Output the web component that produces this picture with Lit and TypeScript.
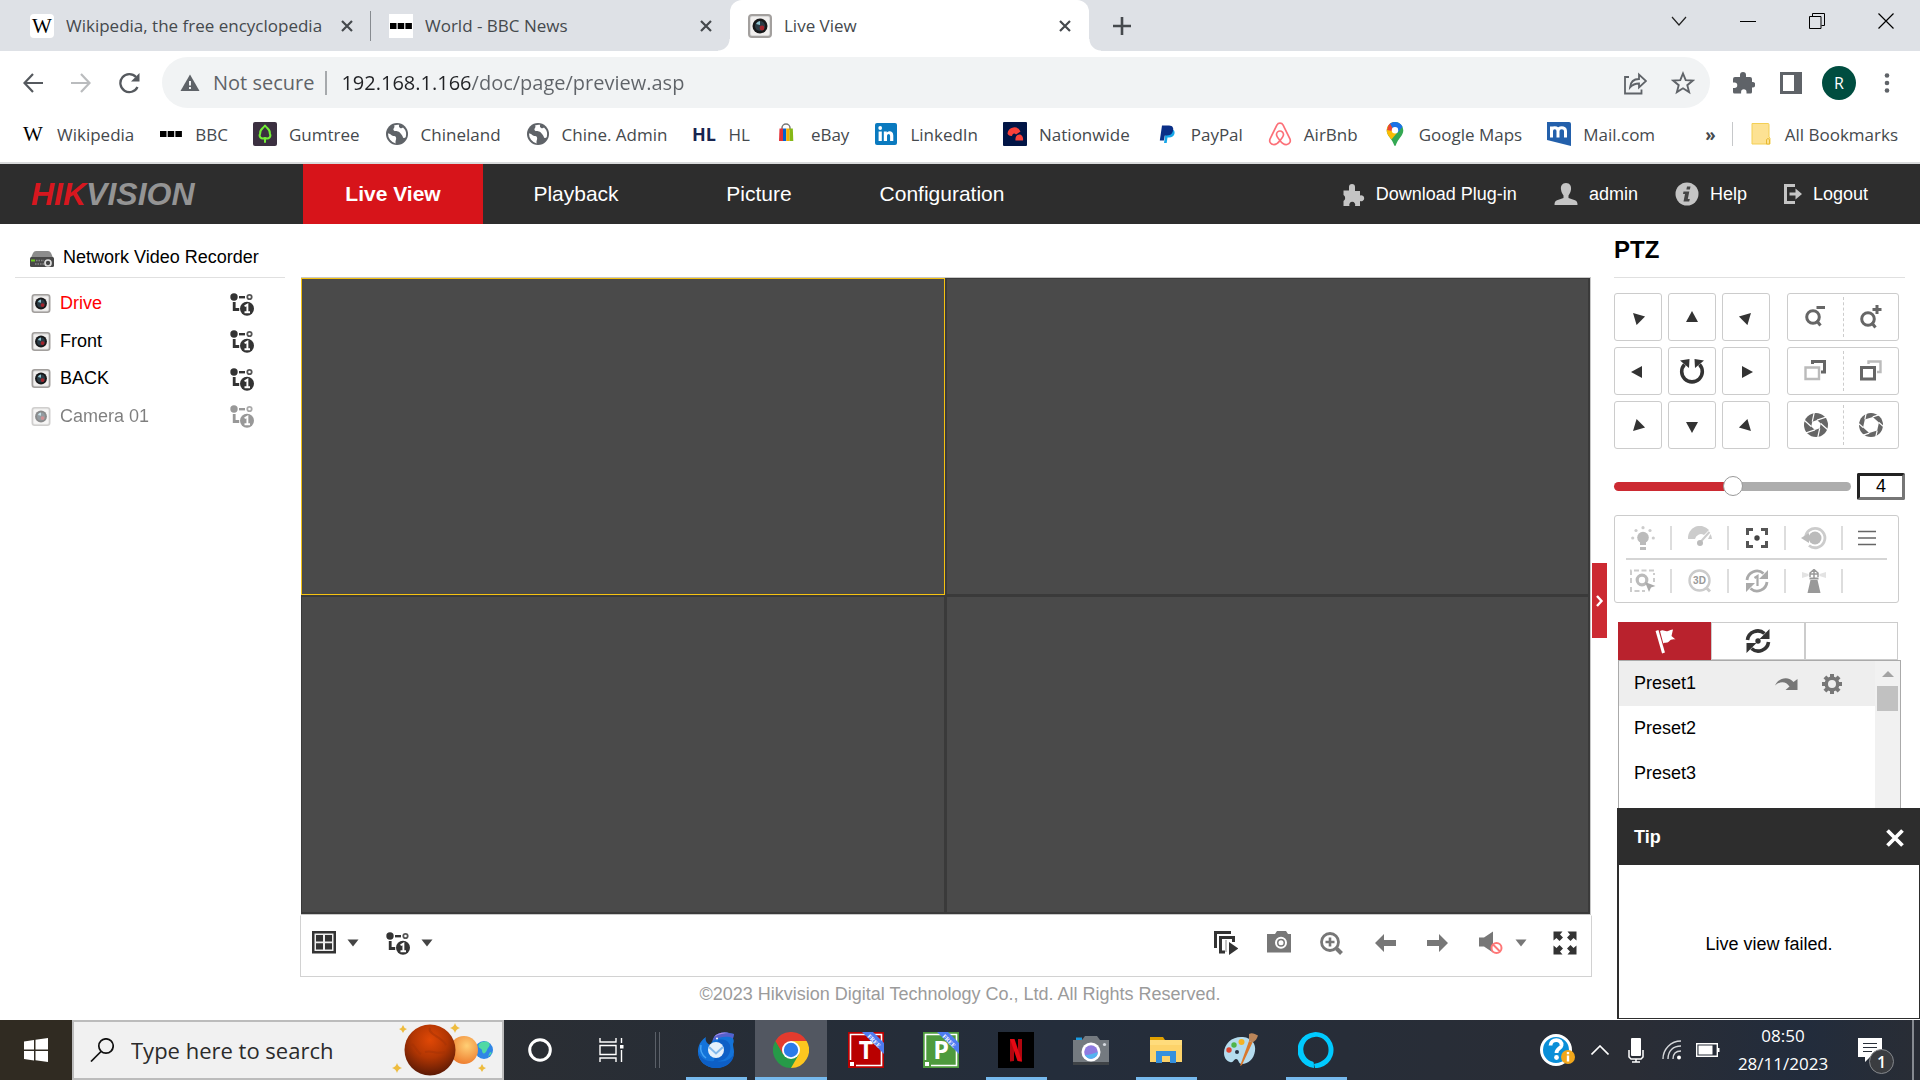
import { LitElement, html, css, svg, TemplateResult } from "lit";
import { customElement, state } from "lit/decorators.js";
import { classMap } from "lit/directives/class-map.js";

const base = css`
  *, *::before, *::after { box-sizing: border-box; }
  button, a { font: inherit; color: inherit; background: none; border: 0; padding: 0; margin: 0; text-decoration: none; cursor: pointer; }
  button { display: flex; align-items: center; justify-content: center; }
  svg { display: block; flex: none; }
  input { font: inherit; color: inherit; border: 0; outline: 0; padding: 0; margin: 0; background: none; min-width: 0; }
  ul { list-style: none; margin: 0; padding: 0; }
`;

const icon = (w: number, h: number, body: TemplateResult<2>, box = `0 0 ${w} ${h}`) =>
  html`<svg width=${w} height=${h} viewBox=${box} aria-hidden="true">${body}</svg>`;

const lensCamera = (w: number, h: number) => icon(w, h, svg`
  <rect x="1" y="1" width="22" height="22" rx="3" fill="#d9d9d9" stroke="#a3a09e" stroke-width="2"/>
  <rect x="3" y="3" width="18" height="18" rx="1" fill="#f1efee"/>
  <circle cx="12" cy="12" r="7.500" fill="#17181a"/>
  <circle cx="12" cy="12" r="5" fill="#2b3b45"/>
  <path d="M8 10a5 5 0 0 1 4-3l0 4z" fill="#8fc3d0"/>
  <circle cx="14" cy="14" r="2.400" fill="#a3232c"/>`, "0 0 24 24");

const streamIcon = () => icon(24, 24, svg`
  <circle cx="4" cy="5" r="3.700" fill="#333"/>
  <path d="M9 5.200h6" stroke="#333" stroke-width="2.400"/>
  <circle cx="19.500" cy="5" r="2.200" fill="none" stroke="#555" stroke-width="1.800"/>
  <path d="M4.200 10v7.500h5" fill="none" stroke="#333" stroke-width="2.800"/>
  <circle cx="17" cy="16.800" r="7" fill="#333"/>
  <path d="M14.600 14.200l2.800-1.600v7.200M14.500 20.300h5.500" fill="none" stroke="#fff" stroke-width="1.900"/>`);

const closeX = () => icon(14, 14, svg`<path d="M2 2l10 10M12 2L2 12" stroke="#45494d" stroke-width="2.200"/>`);

const wikiIcon = (plate: boolean) => icon(24, 24, svg`
  ${plate ? svg`<rect width="24" height="24" rx="4" fill="#fff"/>` : null}
  <text x="12" y="19" text-anchor="middle" font-family="Liberation Serif, serif" font-size="21" fill="#000">W</text>`);

const bbcIcon = (plate: boolean) => icon(24, 24, svg`
  ${plate ? svg`<rect width="24" height="24" fill="#fff"/>` : null}
  <path d="M1 9h6.500v6H1zM8.700 9h6.500v6H8.700zM16.400 9h6.500v6h-6.500z" fill="#000"/>`);

const globeIcon = () => icon(24, 24, svg`
  <circle cx="12" cy="12" r="11" fill="#5f6368"/>
  <path d="M3 11.500c3 0 3 2.500 6 2.500 2 0 2.500 2 2 3.500-.6 1.600-.6 3-.3 4A10 10 0 0 1 3 11.500zM9 3.500c1.500 2-1 2.800-.5 4.500.8 2 4.500.6 6 2.300 1.500 1.800 3 3.200 3.500 5.200.4 1 2 .2 2.800-.6A9.500 9.500 0 0 0 18 5.500c-1.500 1.500-3.500.5-4-.8-.2-.6 0-1.300.2-1.900A10 10 0 0 0 9 3.500z" fill="#fff"/>`);

const puzzle = (fill: string) => icon(24, 24, svg`
  <path d="M9 4a3 3 0 0 1 6 0v2h4a2 2 0 0 1 2 2v3h.500a2.700 2.700 0 0 1 0 5.500H21V21a1.500 1.500 0 0 1-1.500 1.500H15.500V21a2.700 2.700 0 0 0-5.400 0v1.500H3.500A1.500 1.500 0 0 1 2 21v-4h1.500a2.700 2.700 0 0 0 0-5.500H2V8a2 2 0 0 1 2-2h5z" fill=${fill}/>`);

const bookmarks: { name: string; icon: TemplateResult }[] = [
  { name: "Wikipedia", icon: wikiIcon(false) },
  { name: "BBC", icon: bbcIcon(false) },
  { name: "Gumtree", icon: icon(24, 24, svg`
    <rect width="24" height="24" rx="2" fill="#3b3040"/>
    <path d="M12 20v-4M12 16c-4 1.500-6.500-1.500-4.800-4.500C6.500 7.500 9.500 7 12 3.500c2.500 3.500 5.500 4 4.800 8 1.700 3-.8 6-4.800 4.500z" fill="none" stroke="#72ef36" stroke-width="2" stroke-linejoin="round" stroke-linecap="round"/>`) },
  { name: "Chineland", icon: globeIcon() },
  { name: "Chine. Admin", icon: globeIcon() },
  { name: "HL", icon: icon(24, 24, svg`<text x="12" y="19" text-anchor="middle" font-family="Open Sans, sans-serif" font-weight="700" font-size="18" fill="#17244f">HL</text>`) },
  { name: "eBay", icon: icon(24, 24, svg`
    <path d="M7 8V6a4 4 0 0 1 8 0v2" fill="none" stroke="#777" stroke-width="1.500"/>
    <path d="M4.500 6.500H8V19H4z" fill="#e53238"/><path d="M8 6.500h3.200V19H8z" fill="#0064d2"/>
    <path d="M11.200 6.500h3.300V19h-3.300z" fill="#f5af02"/><path d="M14.500 6.500h3.300L18.300 19h-3.800z" fill="#86b817"/>`) },
  { name: "LinkedIn", icon: icon(24, 24, svg`
    <rect x="1" y="1" width="22" height="22" rx="2" fill="#0a7abf"/>
    <circle cx="6.200" cy="6" r="1.900" fill="#fff"/>
    <path d="M4.600 9.500h3.200V19H4.600zM9.800 9.500h3v1.300c1.500-2.300 6.500-2.200 6.500 2.700V19h-3.200v-5c0-3-3.100-2.600-3.100 0v5H9.800z" fill="#fff"/>`) },
  { name: "Nationwide", icon: icon(24, 24, svg`
    <rect width="24" height="24" rx="1" fill="#011546"/>
    <path d="M4.500 11.500A6.800 6.800 0 0 1 17.500 9.500L13 12.500c-1.800-2-3.500-1-4 1.500-2.300.3-4-.8-4.500-2.500z" fill="#f9413a"/>
    <path d="M12.500 18.500c-.8-4.500 3-7 5.500-5.500 2 1.300 2.300 3.500 2 5.500z" fill="#f9413a"/>`) },
  { name: "PayPal", icon: icon(24, 24, svg`
    <path d="M9 21l2-13h7.500c2 1.500 1.800 7.500-4.500 7.500h-1.500L11.700 21z" fill="#16a6e8"/>
    <path d="M4.800 18.500L7 3.500h7c4 0 5 3 3.800 6-1 3-3.300 4-6.300 4H9.800l-.9 5z" fill="#0a2f87"/>`) },
  { name: "AirBnb", icon: icon(24, 24, svg`
    <path d="M12 18.500c-2.500-2.800-3.500-4.500-3.500-6a3.500 3.500 0 0 1 7 0c0 1.500-1 3.200-3.500 6zm0 0c-2 2.800-4.500 4.500-7 4-3-.700-4-3.300-2.800-6L9 3c1.200-2.600 4.800-2.600 6 0l6.800 13.500c1.200 2.700.2 5.300-2.800 6-2.500.500-5-1.200-7-4z" fill="none" stroke="#fc7078" stroke-width="1.700"/>`) },
  { name: "Google Maps", icon: icon(24, 24, svg`
    <path d="M12 0a8.300 8.300 0 0 1 8.300 8.300C20.300 14 15 16.500 12.800 23.300c-.200.900-1.400.9-1.600 0C9 16.500 3.700 14 3.700 8.300A8.300 8.300 0 0 1 12 0z" fill="#34a853"/>
    <path d="M6 14.500C4.500 12.600 3.700 10.700 3.700 8.300c0-2 .7-3.700 1.900-5.200L9.500 6.500l4.800 4L8.500 17.500z" fill="#fbbc04"/>
    <path d="M5.600 3.100A8.300 8.300 0 0 1 9.500.400L12 5 9 9 4 8z" fill="#ea4335"/>
    <path d="M7 1.600C11-1.400 17.500 0 19.500 4.800L14.500 11l-5-5z" fill="#1a73e8"/>
    <circle cx="12" cy="8.300" r="3.200" fill="#fff"/>`) },
  { name: "Mail.com", icon: icon(24, 24, svg`
    <path d="M0 0h22q2 0 2 2v22L0 18z" fill="#2360ab"/>
    <path d="M4.500 15.500V4.500M4.500 9c0-4.500 6.500-4.500 6.500 0v6.500M11 9c0-4.500 7.500-4.500 7.500 0v6.500" fill="none" stroke="#fff" stroke-width="3"/>`) },
];

@customElement("browser-frame")
export class BrowserFrame extends LitElement {
  static styles = [base, css`
    :host { display: block; font-family: "Open Sans", "Noto Sans", sans-serif; font-size: 17px; color: #45494d; background: #fff; }
    .strip { display: flex; height: 51px; background: #dee1e6; padding-left: 12px; }
    .tab { position: relative; display: flex; align-items: center; flex: 0 1 359px; min-width: 0; gap: 12px; padding: 0 17px 0 18px; }
    .tab .title { flex: 1; min-width: 0; justify-content: flex-start; white-space: nowrap; overflow: hidden; }
    .tab.first::after { content: ""; position: absolute; right: 0; top: 11px; width: 1px; height: 30px; background: #878b90; }
    .tab.active { background: #fff; border-radius: 12px 12px 0 0; }
    .tab.active::before, .tab.active::after { content: ""; position: absolute; bottom: 0; width: 12px; height: 12px; }
    .tab.active::before { left: -12px; background: radial-gradient(circle at 0 0, transparent 11px, #fff 12px); }
    .tab.active::after { right: -12px; background: radial-gradient(circle at 100% 0, transparent 11px, #fff 12px); }
    .plus { width: 66px; }
    .window { display: flex; margin-left: auto; height: 42px; }
    .window button { width: 69px; }
    .toolbar { display: flex; padding: 6px 9px 0; }
    .tool { width: 48px; height: 51px; }
    .omni { flex: 1; display: flex; align-items: center; height: 51px; margin: 0 9px; padding: 0 3px 0 16px; border-radius: 26px; background: #f1f3f4; font-size: 20px; color: #5f6368; }
    .omni .safe { margin-left: 11px; white-space: nowrap; }
    .omni .bar { width: 2px; height: 24px; margin: 0 14px 0 11px; background: #a6a9ac; }
    .url { flex: 1; height: 36px; color: transparent; background: linear-gradient(90deg, #202124 130px, #5f6368 130px); -webkit-background-clip: text; background-clip: text; }
    .avatar { width: 34px; height: 34px; border-radius: 50%; background: #004d40; color: #fff; font-size: 16px; display: flex; align-items: center; justify-content: center; }
    .marks { display: flex; align-items: center; height: 56px; padding: 0 22px 2px 21px; border-bottom: 2px solid #d9dadb; gap: 25px; white-space: nowrap; }
    .mark { display: flex; align-items: center; gap: 12px; }
    .more { margin-left: auto; font-weight: 700; }
    .rule { width: 1px; height: 24px; background: #c6c8ca; margin: 0 -9px; }
  `];

  render() {
    return html`
      <div class="strip" role="tablist">
        ${this.tab(wikiIcon(true), "Wikipedia, the free encyclopedia", "first")}
        ${this.tab(bbcIcon(true), "World - BBC News", "")}
        ${this.tab(lensCamera(24, 24), "Live View", "active")}
        <button class="plus" aria-label="New tab">${icon(18, 18, svg`<path d="M9 0v18M0 9h18" stroke="#45494d" stroke-width="2.600"/>`)}</button>
        <div class="window">
          <button aria-label="Search tabs">${icon(16, 10, svg`<path d="M1 1l7 8 7-8" fill="none" stroke="#222" stroke-width="1.200"/>`)}</button>
          <button aria-label="Minimise">${icon(16, 16, svg`<path d="M0 8.500h16" stroke="#000"/>`)}</button>
          <button aria-label="Restore">${icon(16, 16, svg`<path d="M.500 3.500h11.500v12H.500zM3.500 3V.500h12v12H12.500" fill="none" stroke="#000"/>`)}</button>
          <button aria-label="Close">${icon(16, 16, svg`<path d="M.500.500l15 15M15.500.500l-15 15" stroke="#000" stroke-width="1.200"/>`)}</button>
        </div>
      </div>
      <div class="toolbar">
        <button class="tool" aria-label="Back">${icon(20, 20, svg`<path d="M20 10H2M10 1L1.500 10l8.500 9" fill="none" stroke="#55595e" stroke-width="2.200"/>`)}</button>
        <button class="tool" aria-label="Forward">${icon(20, 20, svg`<path d="M0 10h18M10 1l8.500 9-8.500 9" fill="none" stroke="#babcbe" stroke-width="2.200"/>`)}</button>
        <button class="tool" aria-label="Reload">${icon(22, 22, svg`<path d="M19.500 15A9 9 0 1 1 18 5" fill="none" stroke="#55595e" stroke-width="2.300"/><path d="M21.500 1v8.500H13z" fill="#55595e"/>`)}</button>
        <div class="omni">
          ${icon(24, 24, svg`<path d="M12 3.500L21.500 20H2.500z" fill="#5f6368"/><path d="M12 10v4.500M12 16v2" stroke="#f1f3f4" stroke-width="2"/>`)}
          <label class="safe" for="url">Not secure</label>
          <span class="bar"></span>
          <input class="url" id="url" type="text" value="192.168.1.166/doc/page/preview.asp">
          <button class="tool" aria-label="Share">${icon(24, 24, svg`<path d="M6 6H2v16.500h16.500v-4" fill="none" stroke="#5f6368" stroke-width="1.800"/><path d="M7 16.500c.500-5.500 3-8.500 9-8.500V3.500l7 6.500-7 6.500V12.500c-4 0-6.500 1-9 4z" fill="none" stroke="#5f6368" stroke-width="1.800"/>`)}</button>
          <button class="tool" aria-label="Bookmark">${icon(24, 24, svg`<path d="M12 2.500l2.700 6.600 7.100.5-5.500 4.600 1.800 6.900L12 17.300l-6.100 3.800 1.800-6.900L2.200 9.600l7.100-.5z" fill="none" stroke="#5f6368" stroke-width="1.900"/>`)}</button>
        </div>
        <button class="tool" aria-label="Extensions">${puzzle("#5f6368")}</button>
        <button class="tool" aria-label="Side panel">${icon(22, 22, svg`<path d="M1.500 1.500h19v19h-19z" fill="none" stroke="#5f6368" stroke-width="3"/><path d="M14 1h7v20h-7z" fill="#5f6368"/>`)}</button>
        <button class="tool" aria-label="Profile"><span class="avatar">R</span></button>
        <button class="tool" aria-label="Menu">${icon(6, 20, svg`<circle cx="3" cy="2.500" r="2.300" fill="#5f6368"/><circle cx="3" cy="10" r="2.300" fill="#5f6368"/><circle cx="3" cy="17.500" r="2.300" fill="#5f6368"/>`)}</button>
      </div>
      <nav class="marks">
        ${bookmarks.map((b) => html`<a class="mark" href="#">${b.icon}<span>${b.name}</span></a>`)}
        <button class="more" aria-label="More bookmarks">»</button>
        <span class="rule"></span>
        <a class="mark" href="#">${icon(24, 24, svg`<path d="M3 1.500h16q1 0 1 1V15l1 1v6H3z" fill="#fde293" stroke="#f3cf55"/><path d="M17.500 22v-4.500q1.500-2 3 0V22z" fill="#fde293" stroke="#e8b931"/>`)}<span>All Bookmarks</span></a>
      </nav>`;
  }

  private tab(image: TemplateResult, title: string, kind: string) {
    return html`<div class="tab ${kind}">
      ${image}<button class="title" role="tab" aria-selected=${kind === "active"}>${title}</button>
      <button aria-label="Close tab">${closeX()}</button>
    </div>`;
  }
}

const tri = (turn: number) => icon(16, 16, svg`<path d="M8 2L14 13H2z" fill="#333" transform=${`rotate(${turn} 8 9)`}/>`);
const caret = (fill: string) => icon(12, 8, svg`<path d="M.500 .500h11L6 7.500z" fill=${fill}/>`);
const arrowRight = (turn: number) => icon(24, 20, svg`<path d="M1 7h12V1l9 9-9 9v-6H1z" fill="#777" transform=${`rotate(${turn} 12 10)`}/>`);

const aperture = (hole: number) => icon(26, 26, svg`
  <circle cx="13" cy="13" r="12" fill="#666"/>
  ${[0, 60, 120, 180, 240, 300].map((a) => svg`<path d=${`M13 ${13 - hole}l13 -7.500`} stroke="#fff" stroke-width="1.200" transform=${`rotate(${a + 12} 13 13)`}/>`)}
  <path d=${`M13 ${13 - hole}l${hole * 0.87} ${hole / 2}v${hole}l${-hole * 0.87} ${hole / 2}l${-hole * 0.87} ${-hole / 2}v${-hole}z`} fill="#fff" transform="rotate(12 13 13)"/>`);

const ptzPad: [string, TemplateResult][] = [
  ["Up left", tri(-45)], ["Up", tri(0)], ["Up right", tri(45)],
  ["Left", tri(-90)],
  ["Auto scan", icon(26, 26, svg`<path d="M5.500 6.500A10.300 10.300 0 1 0 20.500 6.500" fill="none" stroke="#333" stroke-width="3.600"/><path d="M1 2.500L10.500 1l-.500 9z M25 2.500L15.500 1l.500 9z" fill="#333"/>`)],
  ["Right", tri(90)],
  ["Down left", tri(225)], ["Down", tri(180)], ["Down right", tri(135)],
];

const ptzPairs: [string, TemplateResult][][] = [
  [["Zoom out", icon(24, 24, svg`<circle cx="9" cy="12" r="6.300" fill="none" stroke="#666" stroke-width="3"/><path d="M12.500 15.500l4 5M12.500 2.500h8.500" stroke="#666" stroke-width="3"/>`)],
   ["Zoom in", icon(24, 24, svg`<circle cx="9" cy="14" r="6.300" fill="none" stroke="#666" stroke-width="3"/><path d="M12.500 17.500l4 5M13.500 4.500h9M18 0v9" stroke="#666" stroke-width="3"/>`)]],
  [["Focus near", icon(24, 24, svg`<path d="M8.500 5V2.500h12v10.500H17" fill="none" stroke="#666" stroke-width="3"/><path d="M1.500 8.500h13.500v11.500H1.500z" fill="#fff" stroke="#bbb" stroke-width="2.400"/>`)],
   ["Focus far", icon(24, 24, svg`<path d="M9.500 5V2.500h12v10.500H18" fill="none" stroke="#bbb" stroke-width="2.400"/><path d="M2.500 8.500h13v11.500h-13z" fill="#fff" stroke="#666" stroke-width="3"/>`)]],
  [["Iris close", aperture(5)], ["Iris open", aperture(8.3)]],
];

const ptzTools: [string, TemplateResult | null][] = [
  ["Light", icon(24, 24, svg`<circle cx="12" cy="11.500" r="5.800" fill="#bbb"/><path d="M9 16h6v3H9zM9 21h6v3H9z" fill="#bbb"/><circle cx="12" cy="1.700" r="1.600" fill="#ccc"/><circle cx="5" cy="4.500" r="1.600" fill="#ccc"/><circle cx="19" cy="4.500" r="1.600" fill="#ccc"/><circle cx="1.700" cy="12" r="1.600" fill="#ccc"/><circle cx="22.300" cy="12" r="1.600" fill="#ccc"/>`)],
  ["Wiper", icon(24, 24, svg`<path d="M0 13A12 12 0 0 1 21 4l-5 5a6 6 0 0 0-9 4zM20 13h4a10 10 0 0 0-1.500-5z" fill="#ccc"/><path d="M12 16.500L21.500 6" stroke="#ccc" stroke-width="2"/><circle cx="12" cy="17" r="3" fill="#bbb"/>`)],
  ["Auxiliary focus", icon(22, 20, svg`<path d="M1.500 7V1.500H7M15 1.500h5.500V7M20.500 13v5.500H15M7 18.500H1.500V13" fill="none" stroke="#555" stroke-width="3"/><circle cx="11" cy="10" r="2.700" fill="#444"/>`)],
  ["Lens initialisation", icon(26, 24, svg`<path d="M4.500 12A9.700 9.700 0 1 1 8 19.500" fill="none" stroke="#ccc" stroke-width="2.800"/><circle cx="14" cy="12" r="6.500" fill="#bbb"/><path d="M0 12l8-5v10z" fill="#bbb"/>`)],
  ["Menu", icon(18, 16, svg`<path d="M0 1.500h18M0 8h18M0 14.500h18" stroke="#666" stroke-width="1.700"/>`)],
  ["Manual tracking", icon(26, 24, svg`<path d="M1 6V1.500h23V6M1 9v6M24 9v4M1 18v4h14" fill="none" stroke="#ccc" stroke-width="2" stroke-dasharray="5 2.500"/><circle cx="12" cy="11" r="4.800" fill="none" stroke="#bbb" stroke-width="3.200"/><path d="M15 13l10.500 4-4.500 1.500-2 4.500z" fill="#aaa"/>`)],
  ["3D positioning", icon(24, 24, svg`<circle cx="11.500" cy="11.500" r="10" fill="none" stroke="#ccc" stroke-width="2.400"/><path d="M18.500 19l3.500 3.500" stroke="#ccc" stroke-width="3"/><text x="11.500" y="15.200" text-anchor="middle" font-family="Liberation Sans, sans-serif" font-weight="700" font-size="10" fill="#999">3D</text>`)],
  ["One-touch patrol", icon(24, 24, svg`<path d="M2 11A10 10 0 0 1 18.500 4.500M22 13A10 10 0 0 1 5.500 19.500" fill="none" stroke="#aaa" stroke-width="2.800"/><path d="M23 1v9h-9zM1 23v-9h9z" fill="#aaa"/><path d="M9.500 9l3-2v10" fill="none" stroke="#aaa" stroke-width="2.200"/>`)],
  ["One-touch park", icon(24, 24, svg`<path d="M8.500 11h7l3 13h-13z M7.500 8.500h9v2h-9z" fill="#999"/><path d="M8 8V4l4-3.500L16 4v4M12 1v8M8 5h8" fill="none" stroke="#999" stroke-width="1.500"/><path d="M0 3l6.500 2v2L0 9zM24 3l-6.500 2v2l6.500 2z" fill="#e3e3e3"/>`)],
  ["", null],
];

const flagIcon = icon(24, 26, svg`<path d="M4 2.500L10.500 25" stroke="#fff" stroke-width="3"/><path d="M7 3c3.500-2 5 1 8 0 2-.7 3-1.500 5-1.500L18.500 8l4 3.500c-3.500-.5-5 .3-6.500 2C14 15.500 12 14 10.300 15.500z" fill="#fff"/>`);
const patrolIcon = icon(26, 26, svg`<path d="M2.500 12A10.300 10.300 0 0 1 19.500 5.500M23.500 14A10.300 10.300 0 0 1 6.500 20.500" fill="none" stroke="#333" stroke-width="3.600"/><path d="M24.500 1v10h-10zM1.500 25V15h10z" fill="#333"/><circle cx="13" cy="13" r="2.700" fill="#333"/>`);
const gearIcon = icon(20, 20, svg`
  ${[0, 45, 90, 135].map((a) => svg`<path d="M10 0v20" stroke="#777" stroke-width="4" transform=${`rotate(${a} 10 10)`}/>`)}
  <circle cx="10" cy="10" r="7.500" fill="#777"/><circle cx="10" cy="10" r="4" fill="#eee"/>`);

@customElement("nvr-page")
export class NvrPage extends LitElement {
  @state() private speed = 4;
  @state() private cell = 0;
  @state() private tipOpen = true;

  static styles = [base, css`
    :host { display: flex; flex-direction: column; position: relative; overflow: hidden; font-family: "Liberation Sans", Arial, sans-serif; font-size: 18px; color: #000; background: #fff; }
    header { display: flex; align-items: center; height: 60px; padding-right: 52px; background: #2d2d2d; color: #fff; }
    .logo { width: 303px; padding-left: 31px; font-size: 32px; font-style: italic; font-weight: 700; line-height: 40px; color: #d7171f; }
    .logo span { color: #949494; }
    .nav { display: flex; gap: 3px; font-size: 21px; }
    .nav a { width: 180px; line-height: 60px; text-align: center; }
    .nav .on { background: #d7141a; font-weight: 700; }
    .user { display: flex; gap: 37px; margin-left: auto; }
    .user a { display: flex; align-items: center; gap: 11px; white-space: nowrap; }
    .main { flex: 1; display: flex; min-height: 753px; }
    .side { width: 300px; padding: 14px 15px 0; }
    .device { display: flex; align-items: center; gap: 9px; height: 40px; padding-left: 15px; border-bottom: 1px solid #e0e0e0; }
    .cams { padding-top: 7px; display: grid; grid-template-rows: repeat(4, 1fr); height: 157px; }
    .cams li { display: flex; align-items: center; padding: 0 31px 0 16px; }
    .cams .name { flex: 1; justify-content: flex-start; gap: 9px; }
    .cams .live { color: #f00; }
    .cams li.off { opacity: .5; }
    .center { flex: 1; display: flex; flex-direction: column; padding-top: 53px; min-width: 0; }
    .video { flex: 1; display: grid; grid-template: 1fr 1fr / 1fr 1fr; gap: 1px; margin: 0 1px; padding: 0 1px 1px 0; background: #3a3a3a; border: 1px solid #c8c8c8; border-width: 1px 1px 1px 0; }
    .cell { display: block; background: #4a4a4a; border: 1px solid #3a3a3a; cursor: default; }
    .cell.picked { border-color: #f5c211; }
    .controls { display: flex; align-items: center; height: 62px; padding: 0 14px 7px 11px; border: 1px solid #d2d2d2; border-top-color: #fff; }
    .pick { gap: 11px; margin-right: 27px; }
    .acts { display: flex; align-items: center; gap: 29px; margin-left: auto; }
    .acts .full { margin-left: -3px; }
    .sound { gap: 12px; }
    .ptz { display: flex; width: 328px; padding-right: 15px; gap: 7px; }
    .fold { flex: none; align-self: center; width: 15px; height: 75px; background: #cc2a32; }
    .panel { flex: 1; display: flex; flex-direction: column; min-width: 0; }
    h1 { margin: 0; padding-top: 2px; height: 54px; border-bottom: 1px solid #e0e0e0; font-size: 24px; line-height: 48px; }
    .pads { display: flex; gap: 17px; margin-top: 15px; }
    .pad { display: grid; grid-template-columns: repeat(3, 48px); gap: 6px; }
    .pad button, .pair { height: 48px; border: 1px solid #ccc; border-radius: 3px; }
    .pairs { display: grid; gap: 6px; width: 112px; }
    .pair { display: grid; grid-template-columns: 1fr 1fr; padding: 3px 0; }
    .pair button + button { border-left: 1px dashed #ccc; }
    .speed { display: flex; align-items: center; gap: 6px; height: 27px; margin-top: 24px; }
    .range { appearance: none; flex: 1; height: 20px; background: transparent; cursor: pointer; }
    .range::-webkit-slider-runnable-track { height: 9px; border-radius: 5px; background: linear-gradient(90deg, #cc2a32 50%, #adadad 50%); }
    .range::-webkit-slider-thumb { appearance: none; width: 20px; height: 20px; margin-top: -6px; border: 1px solid #999; border-radius: 50%; background: #fff; }
    .num { width: 48px; height: 27px; border: 3px solid #767676; border-top-color: #222; border-left-color: #222; border-radius: 2px; text-align: center; }
    .tools { display: grid; grid-template-columns: repeat(5, 57px); grid-template-rows: repeat(2, 43px); height: 88px; width: 285px; margin-top: 15px; border: 1px solid #ccc; border-radius: 3px; background: linear-gradient(#d5d5d5, #d5d5d5) center 42px / 261px 2px no-repeat; }
    .tool { display: flex; align-items: center; justify-content: center; border-right: 2px solid #ddd; height: 24px; align-self: center; }
    .tool:nth-child(5n) { border-right-color: transparent; padding-right: 8px; }
    .tabs { display: grid; grid-template-columns: repeat(3, 1fr); height: 38px; width: 280px; margin: 19px 0 0 4px; }
    .tabs button { border: 1px solid #ccc; }
    .tabs .on { background: #b9222d; border-color: #b9222d; }
    .list { display: flex; flex: 1; width: 283px; margin-left: 4px; border: 1px solid #aaa; border-bottom: 0; }
    .list ul { flex: 1; }
    .list li { display: flex; align-items: center; height: 45px; padding: 0 33px 0 15px; gap: 24px; }
    .list li span { flex: 1; }
    .list li.on { background: #eee; }
    .scroll { width: 25px; padding: 10px 2px 0 2px; background: #f1f1f1; display: flex; flex-direction: column; gap: 9px; }
    .scroll svg { margin: 0 auto; }
    .thumb { height: 25px; background: #c1c1c1; }
    footer { height: 43px; line-height: 34px; text-align: center; color: #9b9b9b; }
    .tip { position: absolute; right: 0; bottom: 1px; width: 303px; height: 211px; display: flex; flex-direction: column; background: #fff; border: solid #2d2d2d; border-width: 0 1px 1px 2px; }
    .tiphead { display: flex; align-items: center; justify-content: space-between; height: 57px; padding: 2px 15px 0 15px; background: #2d2d2d; color: #fff; font-weight: 700; }
    .tip p { flex: 1; margin: 0; padding-top: 5px; display: flex; align-items: center; justify-content: center; }
  `];

  render() {
    return html`
      <header>
        <div class="logo">HIK<span>VISION</span></div>
        <nav class="nav"><a class="on" href="#">Live View</a><a href="#">Playback</a><a href="#">Picture</a><a href="#">Configuration</a></nav>
        <nav class="user">
          <a href="#">${icon(22, 24, svg`<path d="M6 5a3 3 0 0 1 6 0v4h5v4.500a3 3 0 1 1 0 5.500V24h-5a3 3 0 1 0-5.500 0H.500v-5a3.500 3.500 0 0 0 0-6V8.500H6z" fill="#c4c4c4"/>`)}Download Plug-in</a>
          <a href="#">${icon(24, 24, svg`<path d="M12 1c4 0 5.500 3 5 6.500-.4 3-1.500 4.500-2.500 6v2.500l6.500 2.300c2 .8 2.500 2.200 2.500 4.700H.500c0-2.500.5-3.900 2.500-4.700L9.500 16v-2.500c-1-1.500-2.100-3-2.500-6C6.500 4 8 1 12 1z" fill="#c4c4c4"/>`)}admin</a>
          <a href="#">${icon(24, 24, svg`<circle cx="12" cy="12" r="11.500" fill="#c4c4c4"/><path d="M12 4.500h3.500l-.600 3h-3.500zM8.500 9.500h5.800L12.800 17h2l-.6 2.500H8.500l1.500-7.500H8z" fill="#444"/>`)}Help</a>
          <a href="#">${icon(18, 20, svg`<path d="M11 1.500H1.500v17H11" fill="none" stroke="#c4c4c4" stroke-width="3"/><path d="M5.500 8.500h6V4.500L18 10l-6.500 5.500v-4h-6z" fill="#c4c4c4"/>`)}Logout</a>
        </nav>
      </header>
      <div class="main">
        <aside class="side">
          <div class="device">${icon(24, 24, svg`<path d="M3 7q1-2 3-2h12q2 0 3 2l3 7H0z" fill="#8c8c8c"/><rect y="11" width="24" height="10" rx="1.500" fill="#484848"/><path d="M1 13.500h4v2H1z" fill="#6cc820"/><path d="M6 14.500h8M5 18h9" stroke="#888" stroke-width="1.500" stroke-dasharray="1.500 1"/><circle cx="18" cy="17" r="3" fill="#444" stroke="#ddd" stroke-width="1.700"/>`)}Network Video Recorder</div>
          <ul class="cams">
            ${[["Drive", "live"], ["Front", ""], ["BACK", ""], ["Camera 01", "off"]].map(([name, kind]) => html`
              <li class=${kind === "off" ? "off" : ""}>
                <button class="name">${lensCamera(20, 19)}<span class=${kind}>${name}</span></button>
                <button aria-label="Stream type">${streamIcon()}</button>
              </li>`)}
          </ul>
        </aside>
        <section class="center">
          <div class="video">
            ${[0, 1, 2, 3].map((i) => html`<button class=${classMap({ cell: true, picked: i === this.cell })} aria-label="Window ${i + 1}" @click=${() => (this.cell = i)}></button>`)}
          </div>
          <div class="controls">
            <button class="pick" aria-label="Window division">${icon(24, 24, svg`<path d="M0 0h24v22.500H0z" fill="#333"/><path d="M2.500 2.500h19v17.500h-19z" fill="#eee"/><path d="M4 4h7v6.500H4zM13 4h7v6.500h-7zM4 12.300h7v6.200H4zM13 12.300h7v6.200h-7z" fill="#333"/>`)}${caret("#444")}</button>
            <button class="pick" aria-label="Stream type">${streamIcon()}${caret("#444")}</button>
            <div class="acts">
              <button aria-label="Start all live view">${icon(24, 24, svg`<path d="M1.500 17V1.500H17" fill="none" stroke="#333" stroke-width="3"/><path d="M11 21H6.500V6.500H19.500V11" fill="none" stroke="#333" stroke-width="3"/><path d="M12 9v12" stroke="#888"/><path d="M15 11l9.500 6.500L15 24z" fill="#333"/>`)}</button>
              <button aria-label="Capture">${icon(24, 24, svg`<path d="M0 3h8l2-3h9l2 3h3v18.500H0z" fill="#777"/><circle cx="14" cy="11.800" r="5" fill="none" stroke="#fff" stroke-width="2"/><circle cx="14" cy="11.800" r="2.500" fill="#fff"/>`)}</button>
              <button aria-label="Digital zoom">${icon(24, 24, svg`<circle cx="10" cy="11" r="8.500" fill="none" stroke="#777" stroke-width="2.800"/><path d="M10 6.500v9M5.500 11h9" stroke="#777" stroke-width="2.600"/><path d="M16.500 17.500l5 5" stroke="#777" stroke-width="4"/>`)}</button>
              <button aria-label="Previous page">${arrowRight(180)}</button>
              <button aria-label="Next page">${arrowRight(0)}</button>
              <button class="sound" aria-label="Audio">${icon(24, 24, svg`<path d="M0 6.500h5l9-6v21l-9-6H0z" fill="#777"/><circle cx="17.500" cy="17" r="5" fill="#fff" stroke="#f77" stroke-width="2"/><path d="M14 13.500l7 7" stroke="#f77" stroke-width="2"/>`)}${caret("#777")}</button>
              <button class="full" aria-label="Full screen">${icon(24, 24, svg`${[0, 90, 180, 270].map((a) => svg`<path d="M.500 .500h9L7 3.500l3 3-3.500 3.500-3-3-3 2.500z" fill="#333" transform=${`rotate(${a} 12 12)`}/>`)}`)}</button>
            </div>
          </div>
        </section>
        <aside class="ptz">
          <button class="fold" aria-label="Hide panel">${icon(8, 12, svg`<path d="M1 1l4.500 5L1 11" fill="none" stroke="#fff" stroke-width="2.400"/>`)}</button>
          <div class="panel">
            <h1>PTZ</h1>
            <div class="pads">
              <div class="pad">${ptzPad.map(([n, i]) => html`<button aria-label=${n}>${i}</button>`)}</div>
              <div class="pairs">${ptzPairs.map((p) => html`<div class="pair">${p.map(([n, i]) => html`<button aria-label=${n}>${i}</button>`)}</div>`)}</div>
            </div>
            <div class="speed">
              <input class="range" type="range" min="1" max="7" aria-label="PTZ speed" .value=${String(this.speed)} @input=${this.setSpeed}>
              <input class="num" type="text" aria-label="Speed value" .value=${String(this.speed)}>
            </div>
            <div class="tools">${ptzTools.map(([n, i]) => (i ? html`<button class="tool" aria-label=${n}>${i}</button>` : html`<span class="tool"></span>`))}</div>
            <div class="tabs"><button class="on" aria-label="Presets">${flagIcon}</button><button aria-label="Patrols">${patrolIcon}</button><button aria-label="Patterns"></button></div>
            <div class="list">
              <ul>
                <li class="on"><span>Preset1</span>
                  <button aria-label="Call preset">${icon(24, 14, svg`<path d="M1 8.500C5 0 15-1 19.500 5L23.500 2v11H11.500l4-3.500C12 4 6 4 1 8.500z" fill="#777"/>`)}</button>
                  <button aria-label="Set preset">${gearIcon}</button></li>
                <li><span>Preset2</span></li>
                <li><span>Preset3</span></li>
              </ul>
              <div class="scroll">${icon(12, 6, svg`<path d="M0 6l6-6 6 6z" fill="#a3a3a3"/>`)}<div class="thumb"></div></div>
            </div>
          </div>
        </aside>
      </div>
      <footer>©2023 Hikvision Digital Technology Co., Ltd. All Rights Reserved.</footer>
      ${this.tipOpen ? html`<div class="tip" role="dialog" aria-label="Tip">
        <div class="tiphead"><span>Tip</span><button aria-label="Close tip" @click=${() => (this.tipOpen = false)}>${icon(18, 18, svg`<path d="M1.500 1.500l15 15M16.500 1.500l-15 15" stroke="#fff" stroke-width="3.800"/>`)}</button></div>
        <p>Live view failed.</p>
      </div>` : null}`;
  }

  private setSpeed(e: Event) {
    this.speed = Number((e.target as HTMLInputElement).value);
  }
}

const pdfTile = (letter: string, fill: string) => icon(36, 36, svg`
  <rect width="36" height="36" fill=${fill}/>
  <path d="M2.500 28V2.500h31v31H8" fill="none" stroke="#fff" stroke-width="1.600"/>
  <path d="M2 30h4v4H2z" fill="#fff"/>
  <text x="18" y="27" text-anchor="middle" font-family="Open Sans, sans-serif" font-weight="700" font-size="25" fill="#fff">${letter}</text>
  <path d="M14 0h11l11 11v11z" fill="#4d7cf0"/>
  <text x="26" y="11" text-anchor="middle" font-family="Liberation Serif, serif" font-weight="700" font-size="6" fill="#fff" transform="rotate(45 26 9)">FREE</text>`);

const star = (x: number, y: number, r: number) => svg`<path d=${`M${x} ${y - r}q${r * 0.2} ${r * 0.8} ${r} ${r}q${-r * 0.8} ${r * 0.2} ${-r} ${r}q${-r * 0.2} ${-r * 0.8} ${-r} ${-r}q${r * 0.8} ${-r * 0.2} ${r} ${-r}z`} fill="#eebc3e"/>`;

const apps: { name: string; state: string; icon: TemplateResult }[] = [
  { name: "Thunderbird", state: "open", icon: icon(36, 36, svg`
    <path d="M8 5C2 9 0 14 0 20c0 9 8 16 18 16s18-7 18-16c0-3-1-5-1-8 1-2 1-4 0-5.500L36 2 31 1C23-.5 16 2 14.500 9L12 13C8 11 7 8 8 5z" fill="#1373d9"/>
    <path d="M14.500 9C16 2 23-.5 31 1l5 1-1 4.500-3-1.500c-6-1-11 0-17.500 4z" fill="#5661cc"/>
    <path d="M16 5c3-4 9-5.500 15-4-5 0-10 1-15 4z" fill="#a98ae8"/>
    <path d="M20 8c8-2 14 3 12 11-1 6-6 10-13 10 8 2 15-2 17-8 0 9-8 15-18 15S1 29 0 20c4 8 10 10 16 9z" fill="#0d5fc6"/>
    <path d="M3 13c-1 5 1 10 5 13" fill="none" stroke="#45a4f5" stroke-width="1.500"/>
    <circle cx="18" cy="18" r="8" fill="#e6f1fb"/><path d="M11 15l7 6.500 7-6.500" fill="none" stroke="#84b9ea" stroke-width="2"/>
    <circle cx="19" cy="6.500" r="1" fill="#fff"/>`) },
  { name: "Google Chrome", state: "open focus", icon: icon(36, 36, svg`
    <path d="M18 18L2.400 9A18 18 0 0 1 33.600 9z" fill="#e33b2e"/>
    <path d="M18 18l15.600-9A18 18 0 0 1 18 36z" fill="#fdc61f"/>
    <path d="M18 18v18A18 18 0 0 1 2.400 9z" fill="#269a48"/>
    <path d="M18 9h15.600L26 22z" fill="#fdc61f"/><path d="M25.800 22.500L18 36l-4-9z" fill="#269a48"/>
    <path d="M2.400 9L10.200 22.500 14 12l4-3V3z" fill="#e33b2e"/>
    <circle cx="18" cy="18" r="9" fill="#fff"/><circle cx="18" cy="18" r="7.200" fill="#2c7be9"/>`) },
  { name: "PDF T", state: "", icon: pdfTile("T", "#b90000") },
  { name: "PDF P", state: "", icon: pdfTile("P", "#4e9a3d") },
  { name: "Netflix", state: "open", icon: icon(36, 36, svg`<rect width="36" height="36" fill="#000"/><path d="M12 7h4v22l-4 .500zM20 7h4v22.500l-4-.500z" fill="#b1060f"/><path d="M12 7h4.500L24 29.500l-4.500-.500z" fill="#e50914"/>`) },
  { name: "Camera", state: "", icon: icon(36, 36, svg`
    <path d="M3 5.500h6v4H3z" fill="#1b9be0"/><path d="M0 8h9l3-4h12l3 4h9v22H0z" fill="#747a80"/><path d="M0 30h36v3H0z" fill="#3f4347"/>
    <circle cx="18" cy="20" r="9.500" fill="#fff"/><circle cx="18" cy="20" r="6.800" fill="#8f7be0"/><path d="M12 23a6.800 6.800 0 0 0 12.800-3c-4 1-8 3-12.800 3z" fill="#54b4f0"/><circle cx="31.500" cy="12.500" r="1.600" fill="#d7dbe0"/>`) },
  { name: "File Explorer", state: "open", icon: icon(36, 36, svg`
    <path d="M2 5h13l2 3H2z" fill="#e0a000"/><path d="M2 8h32v22H2z" fill="#fdd36a"/><path d="M2 8h32v5H2z" fill="#ffdc7c"/>
    <path d="M8 19h20v12h-6v-7h-8v7H8z" fill="#3590de"/>`) },
  { name: "Paint", state: "", icon: icon(36, 36, svg`
    <path d="M1 21C1 11 10 4 20 5c9 1 13 7 12 14-1 8-7 13-13 13-4 0-3-5-6-5-3 .5-2 4-6 3-4-1-6-5-6-9z" fill="#b5dcee"/>
    <circle cx="14" cy="20" r="2" fill="#253244"/><circle cx="6" cy="18" r="2.700" fill="#e04530"/><circle cx="11" cy="13" r="2.700" fill="#50b54a"/><circle cx="18.500" cy="10" r="3" fill="#f5b324"/>
    <path d="M17 34l9-25 3.500 1.500L19 33z" fill="#d9782c"/><path d="M26 9l0-7c3-2 6 0 9 1.500-1 3-2 5-5.500 7z" fill="#bb8559"/>`) },
  { name: "Alexa", state: "open", icon: icon(36, 36, svg`<path d="M16 36A18 18 0 1 1 22 35.500c-2 .500-3.500.500-5 .500l-1-4C20 31 31 28 30.500 17.500A12.600 12.600 0 1 0 14.500 29.500c1.500.500 1.500 2 1.500 6.500z" fill="#00caff"/>`) },
];

@customElement("task-bar")
export class TaskBar extends LitElement {
  static styles = [base, css`
    :host { display: flex; height: 60px; background: linear-gradient(90deg, #2b2e33 25%, #262d37 40%, #242d3b 55%, #2a2d35 85%, #222c3c 94%, #292d35); color: #fff; font-family: "Open Sans", "Noto Sans", sans-serif; font-size: 17px; }
    .start { width: 72px; background: #302b22; }
    .search { display: flex; align-items: center; width: 432px; padding-left: 16px; border: 2px solid #bcbcbc; background: #f1f1f1; color: #2b2b2b; font-size: 22px; }
    .search input { flex: 1; margin-left: 17px; height: 40px; }
    .search input::placeholder { color: #2b2b2b; opacity: 1; }
    .sys { width: 72px; }
    .split { width: 5px; height: 36px; margin: 12px 20px 0 7px; border: solid #5b6068; border-width: 0 1px; }
    .apps { display: flex; gap: 3px; }
    .app { width: 72px; background: none; }
    .app.open { background: linear-gradient(#76b9ed, #76b9ed) bottom / 61px 3px no-repeat; }
    .app.focus { background: linear-gradient(#76b9ed, #76b9ed) bottom / 100% 3px no-repeat #525761; }
    .tray { display: flex; margin-left: auto; }
    .t { width: 36px; }
    .help { width: 48px; }
    .clock { width: 114px; flex-direction: column; line-height: 28px; }
    .note { width: 72px; }
    .peek { width: 8px; border-left: 2px solid #868a90; }
  `];

  render() {
    return html`
      <button class="start" aria-label="Start">${icon(24, 24, svg`<path d="M0 3.500l10-1.500v9.500H0zM11.500 1.800L24 0v11.500H11.500zM0 13h10v9.500L0 21zM11.500 13H24v11l-12.500-1.800z" fill="#fff"/>`)}</button>
      <div class="search">
        ${icon(24, 24, svg`<circle cx="16" cy="8" r="7.200" fill="none" stroke="#111" stroke-width="1.700"/><path d="M11 13.500L1 23.500" stroke="#111" stroke-width="1.700"/>`)}
        <input type="text" placeholder="Type here to search" aria-label="Search">
        ${icon(112, 56, svg`
          <defs><radialGradient id="sun" cx=".5" cy=".3" r=".7"><stop offset="0" stop-color="#e04806"/><stop offset=".5" stop-color="#b23603"/><stop offset="1" stop-color="#5c1a05"/></radialGradient>
          <radialGradient id="venus" cx=".6" cy=".35" r=".7"><stop offset="0" stop-color="#ffcf75"/><stop offset="1" stop-color="#ed7a2c"/></radialGradient></defs>
          <circle cx="94" cy="28" r="9" fill="#2f86e6"/><path d="M89 22c3-3 8-3 10-1 2 3-1 4-2 7-2 5-5 4-5 0-1-2-5-2-3-6zM100 30l2 1-4 4z" fill="#4fd9a4"/>
          <circle cx="74" cy="28" r="14" fill="url(#venus)"/><circle cx="40" cy="28" r="25.500" fill="url(#sun)"/>
          <path d="M22 22c4 3 5 8 9 10M40 6c-3 6 12 9 16 17M35 30c8-2 12 3 20 0" stroke="#a33205" stroke-width="2" fill="none" opacity=".5"/>
          ${star(13, 7, 4)}${star(65, 6, 5)}${star(7, 46, 5)}${star(92, 46, 4)}`)}
      </div>
      <button class="sys" aria-label="Cortana">${icon(26, 26, svg`<circle cx="13" cy="13" r="10.300" fill="none" stroke="#fff" stroke-width="3"/>`)}</button>
      <button class="sys" aria-label="Task view">${icon(26, 24, svg`<path d="M1 0v4h16V0M1 24v-4h16v4M1 7.500h16v9H1zM22.500 0v5M22.500 12v12" fill="none" stroke="#fff" stroke-width="1.400"/><path d="M21 7h3.500v3.500H21z" fill="#fff"/>`)}</button>
      <span class="split"></span>
      <div class="apps">${apps.map((a) => html`<button class="app ${a.state}" aria-label=${a.name}>${a.icon}</button>`)}</div>
      <div class="tray">
        <button class="help" aria-label="Support">${icon(36, 36, svg`<circle cx="16" cy="18" r="14.500" fill="#0a8fd8" stroke="#fff" stroke-width="3"/><path d="M10.500 13.500c0-7.500 12-7 11 0-.5 3-5 3-5 7.500" fill="none" stroke="#fff" stroke-width="3.800"/><circle cx="16.500" cy="25.500" r="2.400" fill="#fff"/><circle cx="28" cy="25" r="7" fill="#f2a71b"/><path d="M28 20v2.200M28 23.500v6" stroke="#fff" stroke-width="2.400"/>`)}</button>
        <button class="t" aria-label="Hidden icons">${icon(18, 10, svg`<path d="M.500 9.500L9 1l8.500 8.500" fill="none" stroke="#fff" stroke-width="1.600"/>`)}</button>
        <button class="t" aria-label="Microphone">${icon(16, 26, svg`<rect x="3" y="1" width="10" height="18" rx="1" fill="#fff"/><path d="M1 13v7l2 2h10l2-2v-7M8 22v3M4 25h8" fill="none" stroke="#fff" stroke-width="1.500"/>`)}</button>
        <button class="t" aria-label="Network">${icon(20, 20, svg`<path d="M1 19C1 9 9 1 19 1M6 19C6 11 11 6 19 6M11 19c0-5 3-8 8-8" fill="none" stroke="#d5d7da" stroke-width="1.400"/><circle cx="17" cy="17.500" r="2" fill="#fff"/>`)}</button>
        <button class="t" aria-label="Battery">${icon(24, 14, svg`<path d="M.700 .700h20.600v12.600H.700z" fill="none" stroke="#fff" stroke-width="1.400"/><path d="M2.500 2.500h14v9h-14zM21.500 5h2v4h-2z" fill="#fff"/>`)}</button>
        <button class="clock"><span>08:50</span><span>28/11/2023</span></button>
        <button class="note" aria-label="Notifications">${icon(36, 48, svg`<path d="M0 0h24v19H12l-5 5v-5H0z" fill="#fff"/><path d="M5 5.500h14M5 9.500h14M5 13.500h9" stroke="#29303a" stroke-width="1.200"/><circle cx="23.500" cy="23.500" r="12" fill="#3a3c40" stroke="#85888c"/><text x="23.500" y="29.500" text-anchor="middle" font-family="Open Sans, sans-serif" font-weight="600" font-size="16" fill="#fff">1</text>`, "0 -12 36 48")}</button>
        <button class="peek" aria-label="Show desktop"></button>
      </div>`;
  }
}

@customElement("app-root")
export class AppRoot extends LitElement {
  static styles = css`
    :host { display: flex; flex-direction: column; min-height: 100vh; }
    nvr-page { flex: 1; }
  `;

  render() {
    return html`<browser-frame></browser-frame><nvr-page></nvr-page><task-bar></task-bar>`;
  }
}
